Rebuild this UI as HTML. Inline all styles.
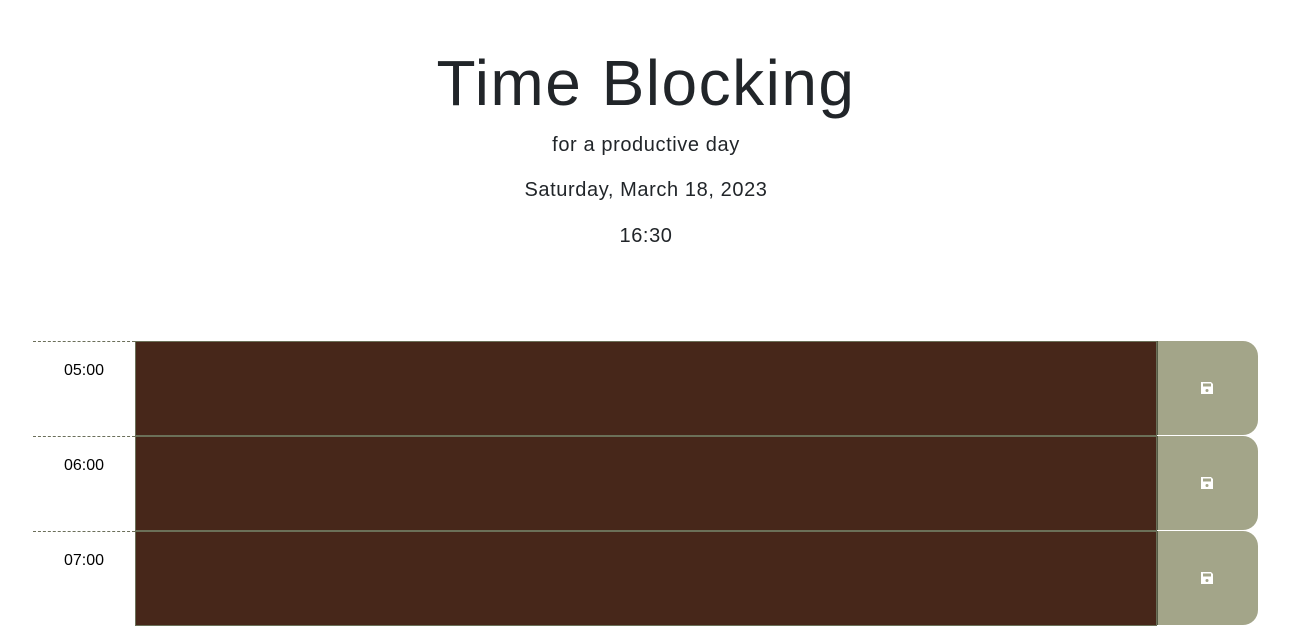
<!DOCTYPE html>
<html><head><style>
body{margin:0;width:1292px;height:580px;overflow:hidden;background:#fff;font-family:"Liberation Sans",sans-serif;color:#212529}
h1{position:absolute;top:44px;left:0;width:1292px;text-align:center;margin:0;font-weight:400;font-size:64px;line-height:78px;letter-spacing:1.5px}
.t{position:absolute;left:0;width:1292px;text-align:center;font-size:20px;line-height:24px;letter-spacing:0.6px}
.row{position:absolute;left:33px;width:1225px;height:95px}
.hour{position:absolute;left:0;top:0;width:102px;height:94px;border-top:1px dashed #6b6f5a;font-size:16px;text-align:center;line-height:58px;color:#000}
.ta{position:absolute;left:102px;top:0;width:1020px;height:93px;background:#47271a;border:1px solid #6b7058}
.btn{position:absolute;left:1124px;top:0;width:100px;height:94px;background:#a3a589;border-radius:0 15px 15px 0;border-left:1px solid #555a45}
.btn svg{position:absolute;left:42px;top:40px}
</style></head><body>
<h1>Time Blocking</h1>
<div class="t" style="top:133px">for a productive day</div>
<div class="t" style="top:178px">Saturday, March 18, 2023</div>
<div class="t" style="top:224px">16:30</div>
<div class="row" style="top:341px"><div class="hour">05:00</div><div class="ta"></div><div class="btn"><svg width="14" height="14" viewBox="0 0 14 14"><path d="M1 1h10l2 2v10H1z" fill="#fff"/><rect x="3" y="2.5" width="8" height="3" fill="#a3a589"/><circle cx="7" cy="9.5" r="1.5" fill="#a3a589"/></svg></div></div>
<div class="row" style="top:436px"><div class="hour">06:00</div><div class="ta"></div><div class="btn"><svg width="14" height="14" viewBox="0 0 14 14"><path d="M1 1h10l2 2v10H1z" fill="#fff"/><rect x="3" y="2.5" width="8" height="3" fill="#a3a589"/><circle cx="7" cy="9.5" r="1.5" fill="#a3a589"/></svg></div></div>
<div class="row" style="top:531px"><div class="hour">07:00</div><div class="ta"></div><div class="btn"><svg width="14" height="14" viewBox="0 0 14 14"><path d="M1 1h10l2 2v10H1z" fill="#fff"/><rect x="3" y="2.5" width="8" height="3" fill="#a3a589"/><circle cx="7" cy="9.5" r="1.5" fill="#a3a589"/></svg></div></div>
</body></html>
